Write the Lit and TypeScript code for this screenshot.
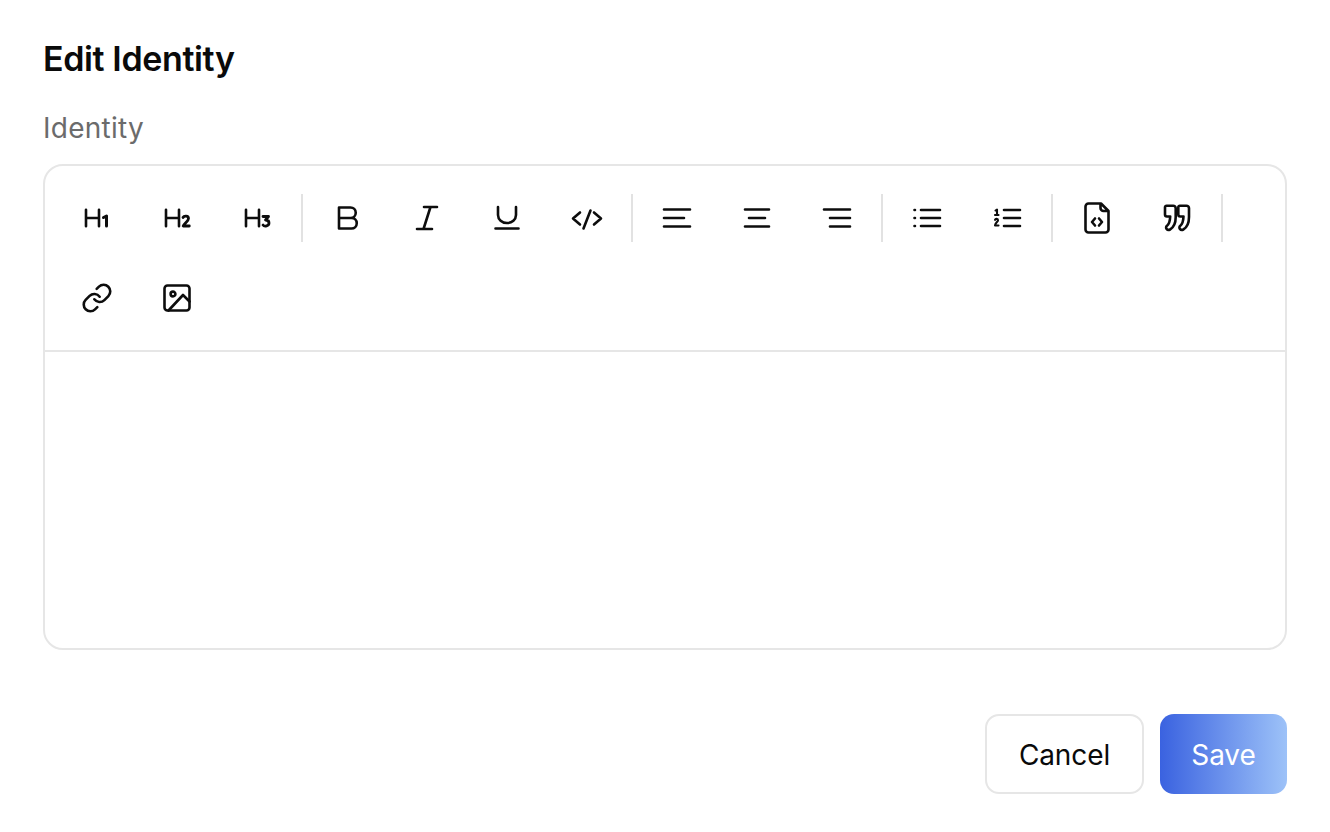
import { LitElement, html, css, svg } from "lit";
import { customElement } from "lit/decorators.js";

const quoteD =
  "M-10.5-12.3H-3.8A2.5 2.5 0 0 1-1.3-9.8V-1C-1.3 5-3.5 9.5-7 11.5-9.8 13-12.3 9.5-10 7.8-8.2 6.3-7 3.5-6.8-1.5H-10A2 2 0 0 1-12-3.5V-10.8A1.5 1.5 0 0 1-10.5-12.3Z";

const icons: Record<string, unknown> = {
  h1: svg`<path d="M-11-8.3V8.3M2-8.3V8.3M-11 0H2"/><path stroke-width="3" d="M6.5-.5 9.5-2V8"/>`,
  h2: svg`<path d="M-11-8.3V8.3M2-8.3V8.3M-11 0H2"/><path stroke-width="2.8" d="M6-.5C7-2.5 11.5-2.5 11.5.5 11.5 3 7.5 5 6.2 8H12.3"/>`,
  h3: svg`<path d="M-11-8.3V8.3M2-8.3V8.3M-11 0H2"/><path stroke-width="2.8" d="M6-1.5H11.5L8.5 2C11 2 12 3.5 12 5 12 8 7.5 9 6 7"/>`,
  bold: svg`<path d="M-8-10.5H3.5a5.2 5.2 0 0 1 0 10.5H-8ZM-8 0H4.5a5.2 5.2 0 0 1 0 10.5H-8Z"/>`,
  italic: svg`<path d="M-3-11H10M-10 11H5M3.5-11-3.5 11"/>`,
  underline: svg`<path d="M-9-11V-3A9 8 0 0 0 9-3V-11M-11.5 10.5H11.5"/>`,
  code: svg`<path d="M-7-5.5-14 .5-7 6.5M7-5.5 14 .5 7 6.5M3.5-7.5-3.5 10.5"/>`,
  left: svg`<path d="M-13-8.5H13M-13 0H7M-13 8.5H13"/>`,
  center: svg`<path d="M-12-8.5H12M-8 0H8M-12 8.5H12"/>`,
  right: svg`<path d="M-13-8.5H13M-7 0H13M-7 8.5H13"/>`,
  ul: svg`<path d="M-6-8H13M-6 0H13M-6 8H13M-12.5-8H-12M-12.5 0H-12M-12.5 8H-12"/>`,
  ol: svg`<path d="M-3-8H13M-3 0H13M-3 8H13"/><path stroke-width="2.1" d="M-11.5-8.5-10-9.5V-4M-12-4H-8.5M-12 .8C-11.5-.5-9-.5-9 1.2-9 2.8-11.5 3.5-12 6.5H-8.5" transform="translate(0 1)"/>`,
  file: svg`<path d="M-8.5-14.5H4L11.5-7V11.5A3 3 0 0 1 8.5 14.5H-8.5A3 3 0 0 1-11.5 11.5V-11.5A3 3 0 0 1-8.5-14.5ZM3.5-14V-10A3 3 0 0 0 6.5-7H11"/><path d="M-2 .5-5 4-2 7.5M2 .5 5 4 2 7.5"/>`,
  quote: svg`<path d="${quoteD}"/><path transform="translate(13.3 0)" d="${quoteD}"/>`,
  link: svg`<g transform="translate(-16 -16) scale(1.333)" stroke-width="1.95"><path d="M10 13a5 5 0 0 0 7.54.54l3-3a5 5 0 0 0-7.07-7.07l-1.72 1.71"/><path d="M14 11a5 5 0 0 0-7.54-.54l-3 3a5 5 0 0 0 7.07 7.07l1.71-1.71"/></g>`,
  image: svg`<rect x="-12.5" y="-12.5" width="25" height="25" rx="3"/><circle cx="-4" cy="-4" r="2.4"/><path d="M-8.5 12.5 6-3 12.5 3.5"/>`,
};

const groups = [
  ["h1", "h2", "h3"],
  ["bold", "italic", "underline", "code"],
  ["left", "center", "right"],
  ["ul", "ol"],
  ["file", "quote"],
  ["link", "image"],
];

@customElement("app-root")
export class AppRoot extends LitElement {
  static styles = css`
    :host {
      display: block;
      min-height: 832px;
      box-sizing: border-box;
      background: #fff;
      padding: 38px 43px 38px;
      font-family: Inter, "Noto Sans", sans-serif;
    }
    h1 {
      margin: 0;
      font-size: 34px;
      line-height: 42px;
      font-weight: 600;
      letter-spacing: -0.38px;
      color: #0a0a0a;
    }
    .label {
      margin-top: 30px;
      font-size: 28px;
      line-height: 36px;
      letter-spacing: 0.25px;
      color: #6b6b6b;
    }
    .card {
      margin-top: 18px;
      height: 486px;
      box-sizing: border-box;
      border: 2px solid #e6e6e6;
      border-radius: 20px;
      display: flex;
      flex-direction: column;
    }
    .toolbar {
      display: flex;
      flex-wrap: wrap;
      padding: 12px;
      border-bottom: 2px solid #e6e6e6;
    }
    .btn {
      width: 80px;
      height: 80px;
      display: flex;
      align-items: center;
      justify-content: center;
    }
    .btn svg {
      width: 40px;
      height: 40px;
      fill: none;
      stroke: #0d0d0d;
      stroke-width: 2.6;
      stroke-linecap: round;
      stroke-linejoin: round;
    }
    .sep {
      width: 10px;
      height: 80px;
      display: flex;
      align-items: center;
      justify-content: center;
    }
    .sep::before {
      content: "";
      width: 2px;
      height: 48px;
      background: #e2e2e2;
    }
    .actions {
      margin-top: 64px;
      display: flex;
      justify-content: flex-end;
      gap: 16px;
    }
    .action {
      height: 80px;
      box-sizing: border-box;
      border-radius: 14px;
      padding: 1px 0 0;
      font: 400 28px Inter, "Noto Sans", sans-serif;
      letter-spacing: -0.1px;
      display: flex;
      align-items: center;
      justify-content: center;
    }
    .cancel {
      width: 159px;
      background: #fff;
      border: 2px solid #e6e6e6;
      color: #0a0a0a;
    }
    .save {
      width: 127px;
      border: 0;
      color: #fff;
      background: linear-gradient(90deg, #3a62e0 0%, #9dc2f8 100%);
    }
  `;

  private icon(name: string) {
    return html`<div class="btn"><svg viewBox="-20 -20 40 40">${icons[name]}</svg></div>`;
  }

  render() {
    return html`
      <h1>Edit Identity</h1>
      <div class="label">Identity</div>
      <div class="card">
        <div class="toolbar">
          ${groups.map(
            (g, i) => html`${g.map((n) => this.icon(n))}${i < groups.length - 1 ? html`<div class="sep"></div>` : ""}`
          )}
        </div>
      </div>
      <div class="actions">
        <button class="action cancel">Cancel</button>
        <button class="action save">Save</button>
      </div>
    `;
  }
}
